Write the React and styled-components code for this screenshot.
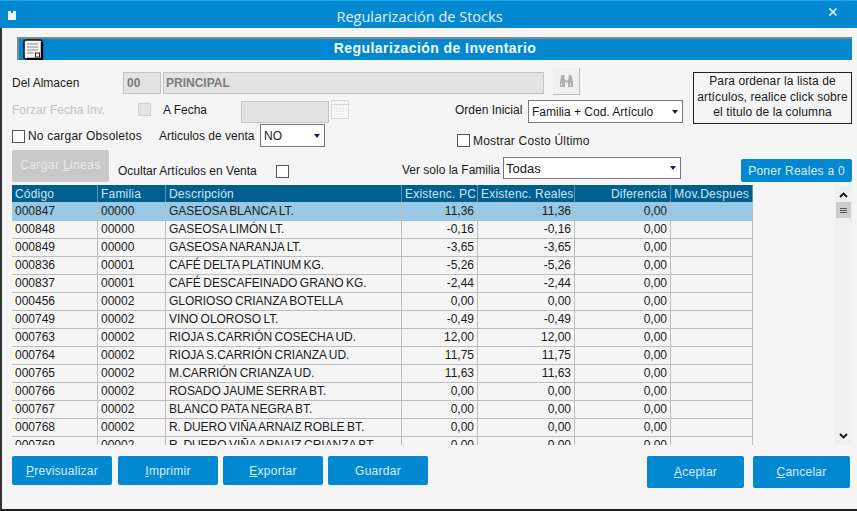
import React from 'react';
import styled, { createGlobalStyle } from 'styled-components';

const Global = createGlobalStyle`
  html, body {
    margin: 0;
    padding: 0;
    overflow: hidden;
  }
  * {
    box-sizing: border-box;
  }
`;

const Window = styled.div`
  width: 857px;
  height: 511px;
  background: #f5f5f5;
  border-left: 2px solid #333;
  border-bottom: 2px solid #222;
  display: flex;
  flex-direction: column;
  font-family: "Liberation Sans", Arial, sans-serif;
  font-size: 12px;
  color: #1a1a1a;
  position: relative;
`;

const TitleBar = styled.div`
  height: 28px;
  margin-left: -2px;
  background: #0288d1;
  border-top: 1px solid #1fa5ee;
  display: flex;
  align-items: center;
  justify-content: center;
  color: #e4f3fc;
  font-family: "Open Sans", sans-serif;
  font-size: 14.5px;
  position: relative;
  padding: 3px 18px 0 0;
`;

const AppIcon = styled.svg`
  position: absolute;
  left: 7px;
  top: 9px;
`;

const CloseIcon = styled.svg`
  position: absolute;
  right: 19px;
  top: 6px;
`;

const Body = styled.div`
  flex: 1;
  padding: 9px 5px 0 10px;
  display: flex;
  flex-direction: column;
`;

const Banner = styled.div`
  height: 23px;
  margin-left: 5px;
  background: #0288d1;
  border-top: 2px solid #7d8a92;
  border-left: 2px solid #7d8a92;
  color: #f2f9fd;
  font-size: 14px;
  font-weight: bold;
  letter-spacing: 0.42px;
  display: flex;
  align-items: center;
  justify-content: center;
  position: relative;
  padding: 0 1px 3px 0;
`;

const BannerIcon = styled.svg`
  position: absolute;
  left: 4px;
  top: 0;
`;

const Row = styled.div`
  height: ${({ h }) => h}px;
  margin-top: ${({ mt }) => mt || 0}px;
  display: flex;
  align-items: ${({ align }) => align || 'center'};
  position: relative;
`;

const Label = styled.span`
  width: ${({ w }) => (w ? `${w}px` : 'auto')};
  margin-left: ${({ ml }) => ml || 0}px;
  margin-top: ${({ mt }) => mt || 0}px;
  flex: none;
  white-space: nowrap;
  letter-spacing: ${({ wide }) => (wide ? '0.2px' : 'normal')};
  color: ${({ muted }) => (muted ? '#c2c2c2' : '#1a1a1a')};
`;

const Field = styled.div`
  width: ${({ w }) => w}px;
  height: 22px;
  margin-left: ${({ ml }) => ml || 0}px;
  flex: none;
  background: #e3e3e3;
  border: 1px solid #c4c4c4;
  color: #7c7c7c;
  font-weight: bold;
  display: flex;
  align-items: center;
  padding-left: ${({ pl }) => pl || 2}px;
`;

const Check = styled.span`
  width: 13px;
  height: 13px;
  margin-left: ${({ ml }) => ml || 0}px;
  margin-top: ${({ mt }) => mt || 0}px;
  margin-right: ${({ mr }) => mr || 0}px;
  flex: none;
  background: ${({ disabled }) => (disabled ? '#e3e3e3' : '#fff')};
  border: 1px solid ${({ disabled }) => (disabled ? '#cfcfcf' : '#555')};
`;

const Select = styled.div`
  width: ${({ w }) => w}px;
  height: ${({ h }) => h || 23}px;
  margin-left: ${({ ml }) => ml || 0}px;
  margin-top: ${({ mt }) => mt || 0}px;
  flex: none;
  background: #fff;
  border: 1px solid #777;
  font-size: ${({ large }) => (large ? '13px' : '12px')};
  display: flex;
  align-items: center;
  justify-content: space-between;
  padding: 0 4px 0 ${({ large }) => (large ? '2px' : '3px')};
  &::after {
    content: '';
    border-left: 3.5px solid transparent;
    border-right: 3.5px solid transparent;
    border-top: 4px solid #141f4f;
  }
`;

const FindButton = styled.div`
  width: 27px;
  height: 27px;
  margin-left: 9px;
  margin-top: -4px;
  flex: none;
  background: #f0f0f0;
  border-right: 1px solid #bdbdbd;
  border-bottom: 1px solid #bdbdbd;
  display: flex;
  align-items: center;
  justify-content: center;
`;

const CalendarIcon = styled.svg`
  margin-left: 2px;
  margin-top: -4px;
  flex: none;
`;

const Note = styled.div`
  position: absolute;
  left: 681px;
  top: 0;
  width: 159px;
  height: 52px;
  border: 1px solid #222;
  text-align: center;
  font-size: 12px;
  line-height: 15.5px;
  padding-top: 1px;
  letter-spacing: 0.1px;
`;

const LoadButton = styled.div`
  width: 97px;
  height: 32px;
  flex: none;
  background: #c9c9c9;
  border-radius: 2px;
  color: #e9e9e9;
  letter-spacing: 0.4px;
  text-align: center;
  line-height: 30px;
`;

const BlueButton = styled.button`
  width: ${({ w }) => w}px;
  height: ${({ h }) => h || 29}px;
  margin-left: ${({ ml }) => ml || 0}px;
  margin-top: ${({ mt }) => mt || 0}px;
  flex: none;
  padding: 0;
  background: #0288d1;
  border: none;
  border-radius: 2px;
  color: #d9eef9;
  font-family: inherit;
  font-size: 12px;
  letter-spacing: 0.25px;
  u {
    text-decoration-thickness: 1px;
  }
`;

const TableArea = styled.div`
  height: 260px;
  margin-top: 3px;
  display: flex;
  justify-content: space-between;
`;

const Grid = styled.div`
  width: 741px;
  height: 260px;
  overflow: hidden;
`;

const GridRow = styled.div`
  display: grid;
  grid-template-columns: 86px 68px 236px 76px 97px 96px 82px;
  height: ${({ header, selected }) => (header ? '17px' : selected ? '19px' : '18px')};
  background: ${({ header, selected }) => (header ? '#005f8f' : selected ? '#98c8e4' : '#f5f5f5')};
  color: ${({ header }) => (header ? '#cfe6f3' : '#1a1a1a')};
  border-bottom: ${({ header, selected }) => (header || selected ? 'none' : '1px solid #bdbdbd')};
`;

const Cell = styled.div`
  padding: 0 3px;
  line-height: ${({ header, selected }) => (header ? '18px' : selected ? '19px' : '17px')};
  white-space: nowrap;
  overflow: hidden;
  text-align: ${({ right }) => (right ? 'right' : 'left')};
  border-right: 1px solid ${({ header }) => (header ? '#5d93b3' : '#bdbdbd')};
  ${({ header }) => header && 'letter-spacing: 0.2px;'}
  ${({ tight }) => tight && 'word-spacing: -0.8px; letter-spacing: -0.05px;'}
`;

const Scrollbar = styled.div`
  width: 17px;
  height: 260px;
  background: #f0f0f0;
  position: relative;
`;

const Thumb = styled.div`
  position: absolute;
  left: 1px;
  top: 17px;
  width: 15px;
  height: 16px;
  background: #cdcdcd;
  display: flex;
  flex-direction: column;
  justify-content: center;
  gap: 1px;
  align-items: center;
  i {
    width: 7px;
    height: 1px;
    background: #555;
  }
`;

const Arrow = styled.svg`
  position: absolute;
  left: 4px;
  top: ${({ top }) => top}px;
`;

const Footer = styled.div`
  margin-top: 11px;
  display: flex;
  align-items: flex-start;
`;

const rows = [
  ['000847', '00000', 'GASEOSA BLANCA LT.', '11,36', '11,36', '0,00'],
  ['000848', '00000', 'GASEOSA LIMÓN LT.', '-0,16', '-0,16', '0,00'],
  ['000849', '00000', 'GASEOSA NARANJA LT.', '-3,65', '-3,65', '0,00'],
  ['000836', '00001', 'CAFÉ DELTA PLATINUM KG.', '-5,26', '-5,26', '0,00'],
  ['000837', '00001', 'CAFÉ DESCAFEINADO GRANO KG.', '-2,44', '-2,44', '0,00'],
  ['000456', '00002', 'GLORIOSO CRIANZA BOTELLA', '0,00', '0,00', '0,00'],
  ['000749', '00002', 'VINO OLOROSO LT.', '-0,49', '-0,49', '0,00'],
  ['000763', '00002', 'RIOJA S.CARRIÓN COSECHA UD.', '12,00', '12,00', '0,00'],
  ['000764', '00002', 'RIOJA S.CARRIÓN CRIANZA UD.', '11,75', '11,75', '0,00'],
  ['000765', '00002', 'M.CARRIÓN CRIANZA UD.', '11,63', '11,63', '0,00'],
  ['000766', '00002', 'ROSADO JAUME SERRA BT.', '0,00', '0,00', '0,00'],
  ['000767', '00002', 'BLANCO PATA NEGRA BT.', '0,00', '0,00', '0,00'],
  ['000768', '00002', 'R. DUERO VIÑA ARNAIZ ROBLE BT.', '0,00', '0,00', '0,00'],
  ['000769', '00002', 'R. DUERO VIÑA ARNAIZ CRIANZA BT.', '0,00', '0,00', '0,00'],
];

const App = () => (
  <Window>
    <Global />
    <TitleBar>
      <AppIcon width="10" height="11" viewBox="0 0 10 11">
        <path d="M1 1h3v2h2V1h3v9H1z" fill="#eef6fb" />
      </AppIcon>
      Regularización de Stocks
      <CloseIcon width="10" height="10" viewBox="0 0 10 10">
        <path d="M1.5 1.5l7 7M8.5 1.5l-7 7" stroke="#fff" strokeWidth="1.5" />
      </CloseIcon>
    </TitleBar>
    <Body>
      <Banner>
        <BannerIcon width="21" height="21" viewBox="0 0 21 21">
          <rect x="1" y="1" width="18" height="19" rx="2" fill="#f4f4f4" stroke="#111" strokeWidth="1.6" />
          <path d="M19 3v17H4" fill="none" stroke="#000" strokeWidth="2.4" />
          <path d="M4 5h11M4 8h11M4 11h11M4 14h7" stroke="#8b8b8b" strokeWidth="1.2" />
          <rect x="12.5" y="14" width="4" height="4" fill="#fff" stroke="#222" />
        </BannerIcon>
        Regularización de Inventario
      </Banner>

      <Row h={22} mt={12}>
        <Label w={111}>Del Almacen</Label>
        <Field w={38} pl={3}>00</Field>
        <Field w={381} ml={2}>PRINCIPAL</Field>
        <FindButton>
          <svg width="15" height="14" viewBox="0 0 15 14">
            <path d="M2.5 1h3v4h.5v8H1V8z" fill="#b0b0b0" />
            <path d="M12.5 1h-3v4H9v8h5V8z" fill="#b0b0b0" />
            <rect x="6" y="6" width="3" height="3" fill="#c4c4c4" />
            <path d="M2.5 9v3M11.5 9v3" stroke="#e2e2e2" />
          </svg>
        </FindButton>
        <Note>
          Para ordenar la lista de<br />
          artículos, realice click sobre<br />
          el titulo de la columna
        </Note>
      </Row>

      <Row h={23} mt={6}>
        <Label w={126} mt={-4} muted>Forzar Fecha Inv.</Label>
        <Check disabled mt={-4} />
        <Label w={78} ml={12} mt={-4}>A Fecha</Label>
        <Field w={88} />
        <CalendarIcon width="18" height="19" viewBox="0 0 18 19">
          <rect x="0.5" y="0.5" width="17" height="18" fill="#f8f8f8" stroke="#d8d8d8" />
          <path d="M0 4.5h18" stroke="#d8d8d8" />
          <path d="M3 8h12M3 11h12M3 14h12M6 5v11M9 5v11M12 5v11" stroke="#e2e2e2" strokeDasharray="1 2" />
        </CalendarIcon>
        <Label w={73} ml={106} mt={-4}>Orden Inicial</Label>
        <Select w={155}>Familia + Cod. Artículo</Select>
      </Row>

      <Row h={23} mt={1}>
        <Check mt={1} mr={3} />
        <Label w={131} mt={1} wide>No cargar Obsoletos</Label>
        <Label w={101}>Articulos de venta</Label>
        <Select w={65}>NO</Select>
        <Check ml={132} mt={10} mr={3} />
        <Label mt={10} wide>Mostrar Costo Último</Label>
      </Row>

      <Row h={32} mt={3} align="flex-start">
        <LoadButton>Cargar <u>L</u>ineas</LoadButton>
        <Label w={158} ml={9} mt={14}>Ocultar Artículos en Venta</Label>
        <Check mt={15} />
        <Label w={101} ml={113} mt={13}>Ver solo la Familia</Label>
        <Select w={178} h={22} mt={7} large>Todas</Select>
        <BlueButton w={111} h={23} ml={60} mt={9}>Poner Reales a 0</BlueButton>
      </Row>

      <TableArea>
        <Grid>
          <GridRow header>
            <Cell header>Código</Cell>
            <Cell header>Familia</Cell>
            <Cell header>Descripción</Cell>
            <Cell header right>Existenc. PC</Cell>
            <Cell header right>Existenc. Reales</Cell>
            <Cell header right>Diferencia</Cell>
            <Cell header right>Mov.Despues</Cell>
          </GridRow>
          {rows.map((row, index) => {
            const selected = index === 0;
            return (
              <GridRow key={row[0]} selected={selected}>
                <Cell selected={selected}>{row[0]}</Cell>
                <Cell selected={selected}>{row[1]}</Cell>
                <Cell selected={selected} tight>{row[2]}</Cell>
                <Cell selected={selected} right>{row[3]}</Cell>
                <Cell selected={selected} right>{row[4]}</Cell>
                <Cell selected={selected} right>{row[5]}</Cell>
                <Cell selected={selected} />
              </GridRow>
            );
          })}
        </Grid>
        <Scrollbar>
          <Arrow top={7} width="9" height="7" viewBox="0 0 9 7">
            <path d="M1 5l3.5-3.5L8 5" fill="none" stroke="#111" strokeWidth="1.8" />
          </Arrow>
          <Thumb><i /><i /><i /></Thumb>
          <Arrow top={247} width="9" height="7" viewBox="0 0 9 7">
            <path d="M1 2l3.5 3.5L8 2" fill="none" stroke="#111" strokeWidth="1.8" />
          </Arrow>
        </Scrollbar>
      </TableArea>

      <Footer>
        <BlueButton w={100}><u>P</u>revisualizar</BlueButton>
        <BlueButton w={100} ml={6}><u>I</u>mprimir</BlueButton>
        <BlueButton w={100} ml={5}><u>E</u>xportar</BlueButton>
        <BlueButton w={100} ml={5}>Guardar</BlueButton>
        <BlueButton w={97} h={32} ml={219}><u>A</u>ceptar</BlueButton>
        <BlueButton w={97} h={32} ml={9}><u>C</u>ancelar</BlueButton>
      </Footer>
    </Body>
  </Window>
);

export default App;
